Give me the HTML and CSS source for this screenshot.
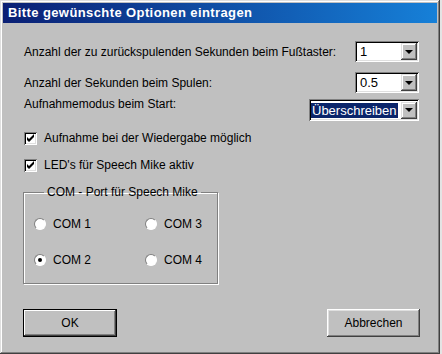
FILE: index.html
```html
<!DOCTYPE html>
<html lang="de">
<head>
    <meta charset="UTF-8">
    <meta name="viewport" content="width=device-width, initial-scale=1.0">
    <title>Optionen</title>
    <link rel="stylesheet" href="styles.css">
</head>
<body>
    <!-- Dialogfenster -->
    <div class="window">
        <div class="titlebar">Bitte gewünschte Optionen eintragen</div>

        <div class="content">
            <!-- Auswahlfelder -->
            <div class="row row-first">
                <span class="label">Anzahl der zu zurückspulenden Sekunden beim Fußtaster:</span>
                <div class="combo combo-small">
                    <span class="value">1</span>
                    <span class="drop"><span class="arrow"></span></span>
                </div>
            </div>
            <div class="row row-second">
                <span class="label">Anzahl der Sekunden beim Spulen:</span>
                <div class="combo combo-small">
                    <span class="value">0.5</span>
                    <span class="drop"><span class="arrow"></span></span>
                </div>
            </div>
            <div class="row row-third">
                <span class="label label-top">Aufnahmemodus beim Start:</span>
                <div class="combo combo-wide">
                    <span class="value"><span class="selected">Überschreiben</span></span>
                    <span class="drop"><span class="arrow"></span></span>
                </div>
            </div>

            <!-- Kontrollkästchen -->
            <div class="check check-first">
                <span class="box">
                    <svg width="9" height="9" viewBox="0 0 9 9"><path d="M1 3 L3 5 L8 0 L8 3 L3 8 L1 6 Z" fill="#000"/></svg>
                </span>
                <span>Aufnahme bei der Wiedergabe möglich</span>
            </div>
            <div class="check">
                <span class="box">
                    <svg width="9" height="9" viewBox="0 0 9 9"><path d="M1 3 L3 5 L8 0 L8 3 L3 8 L1 6 Z" fill="#000"/></svg>
                </span>
                <span>LED's für Speech Mike aktiv</span>
            </div>

            <!-- Gruppe mit den COM-Ports -->
            <fieldset class="group">
                <legend>COM - Port für Speech Mike</legend>
                <div class="radios">
                    <div class="radio"><span class="dot"></span>COM 1</div>
                    <div class="radio"><span class="dot"></span>COM 3</div>
                    <div class="radio"><span class="dot checked"></span>COM 2</div>
                    <div class="radio"><span class="dot"></span>COM 4</div>
                </div>
            </fieldset>

            <!-- Schaltflächen -->
            <div class="buttons">
                <button class="btn btn-default">OK</button>
                <button class="btn">Abbrechen</button>
            </div>
        </div>
    </div>
</body>
</html>
```

FILE: styles.css
```css
/* Grundlayout */
body {
    margin: 0;
    background: #e4e4e4;
    font-family: "Liberation Sans", Arial, sans-serif;
    font-size: 12px;
    color: #000;
}

/* Fensterrahmen im klassischen Stil */
.window {
    width: 440px;
    height: 354px;
    box-sizing: border-box;
    padding: 3px;
    background: #c0c0c0;
    box-shadow: inset -1px -1px #404040, inset 1px 1px #dfdfdf,
                inset -2px -2px #808080, inset 2px 2px #fff;
}

/* Titelleiste mit Farbverlauf */
.titlebar {
    height: 20px;
    line-height: 20px;
    padding-left: 5px;
    background: linear-gradient(to right, #0a1f74, #1680d8);
    color: #fff;
    font-weight: bold;
    font-size: 13px;
    letter-spacing: 0.4px;
}

.content {
    padding: 18px 18px 0 21px;
}

/* Zeilen mit Beschriftung und Auswahlfeld */
.row {
    display: flex;
    justify-content: space-between;
    align-items: center;
}
.row-second {
    margin-top: 10px;
}
.row-third {
    margin-top: 6px;
    align-items: flex-start;
}
.label-top {
    margin-top: -2px;
}

/* Kombinationsfeld */
.combo {
    height: 21px;
    box-sizing: border-box;
    display: flex;
    align-items: center;
    background: #fff;
    box-shadow: inset 1px 1px #808080, inset -1px -1px #fff,
                inset 2px 2px #000, inset -2px -2px #dfdfdf;
    padding: 2px;
}
.combo-small {
    width: 64px;
}
.combo-wide {
    width: 110px;
    height: 22px;
}
.value {
    flex: 1;
    padding-left: 3px;
    font-size: 13px;
    line-height: 17px;
    white-space: nowrap;
    overflow: hidden;
}
.combo-wide .value {
    padding-left: 0;
}
.selected {
    background: #0a246a;
    color: #fff;
    padding: 0 1px;
}
.drop {
    width: 16px;
    height: 17px;
    display: flex;
    align-items: center;
    justify-content: center;
    background: #c0c0c0;
    box-shadow: inset -1px -1px #404040, inset 1px 1px #dfdfdf,
                inset -2px -2px #808080, inset 2px 2px #fff;
}
.arrow {
    width: 0;
    height: 0;
    border-left: 4px solid transparent;
    border-right: 4px solid transparent;
    border-top: 4px solid #000;
}

/* Kontrollkästchen */
.check {
    display: flex;
    align-items: center;
    gap: 7px;
    margin-top: 13px;
}
.check-first {
    margin-top: 10px;
}
.box {
    width: 13px;
    height: 13px;
    box-sizing: border-box;
    display: flex;
    align-items: center;
    justify-content: center;
    background: #fff;
    box-shadow: inset 1px 1px #808080, inset -1px -1px #fff,
                inset 2px 2px #000, inset -2px -2px #dfdfdf;
}

/* Gruppenrahmen */
.group {
    width: 195px;
    box-sizing: border-box;
    margin: 13px 0 0 -1px;
    padding: 18px 0 16px 10px;
    border: 1px solid #808080;
    box-shadow: inset 1px 1px #fff, 1px 1px #fff;
}
.group legend {
    padding: 0 3px;
    margin-left: 10px;
    font-size: 12px;
}
.radios {
    display: grid;
    grid-template-columns: 111px 1fr;
    row-gap: 22px;
}
.radio {
    display: flex;
    align-items: center;
    gap: 7px;
    height: 14px;
}
.dot {
    width: 12px;
    height: 12px;
    border-radius: 50%;
    box-sizing: border-box;
    display: flex;
    align-items: center;
    justify-content: center;
    background: #fff;
    border: 1px solid;
    border-color: #808080 #fff #fff #808080;
}
.dot.checked::after {
    content: "";
    width: 4px;
    height: 4px;
    border-radius: 50%;
    background: #000;
}

/* Schaltflächen */
.buttons {
    display: flex;
    justify-content: space-between;
    margin-top: 25px;
    margin-left: -1px;
    margin-right: -1px;
}
.btn {
    width: 93px;
    height: 28px;
    font-family: "Liberation Sans", Arial, sans-serif;
    font-size: 12px;
    color: #000;
    background: #c0c0c0;
    border: none;
    box-shadow: inset -1px -1px #404040, inset 1px 1px #fff,
                inset -2px -2px #808080, inset 2px 2px #dfdfdf;
    cursor: pointer;
}
.btn-default {
    width: 94px;
    outline: 1px solid #000;
    outline-offset: -1px;
    box-shadow: inset 1px 1px #000, inset -1px -1px #000,
                inset -2px -2px #404040, inset 2px 2px #fff,
                inset -3px -3px #808080;
}
```
